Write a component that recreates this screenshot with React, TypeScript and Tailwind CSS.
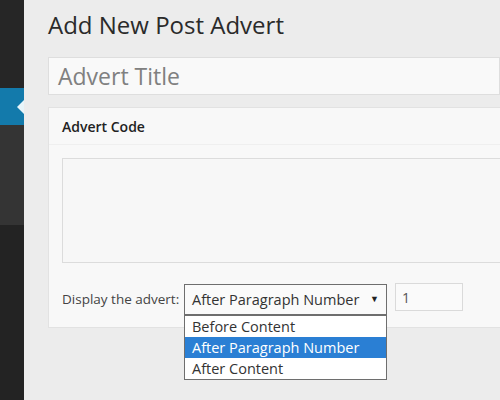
import React from "react";

export default function App() {
  return (
    <div
      className="w-[500px] h-[400px] overflow-hidden flex bg-[#ececec]"
      style={{ fontFamily: '"Open Sans", "Noto Sans", sans-serif' }}
    >
      {/* sidebar */}
      <div className="w-[24px] shrink-0 flex flex-col">
        <div className="h-[88px] bg-[#262626]" />
        <div className="h-[37px] bg-[#137aab] relative">
          <div className="absolute right-0 top-[12px] w-0 h-0 border-y-[7px] border-y-transparent border-r-[7px] border-r-[#e8f5fa]" />
        </div>
        <div className="h-[100px] bg-[#343434]" />
        <div className="flex-1 bg-[#232323]" />
      </div>

      {/* main */}
      <div className="flex-1 pl-[24px] flex flex-col">
        <div className="h-[57px] pt-[10px]">
          <h1 className="text-[24px] leading-[30px] text-[#2a2a2a] font-normal">
            Add New Post Advert
          </h1>
        </div>

        <div className="h-[38px] bg-[#f9f9f9] border border-[#dedede] flex items-center pl-[9px]">
          <span className="text-[23px] text-[#808080] leading-none">Advert Title</span>
        </div>

        <div className="mt-[12px] h-[221px] bg-[#f8f8f8] border border-[#e2e2e2] border-r-0 flex flex-col">
          <div className="h-[37px] flex items-center pl-[13px] border-b border-[#efefef]">
            <span className="text-[14px] font-semibold text-[#222]">
              Advert Code
            </span>
          </div>
          <div className="pl-[13px] pt-[13px]">
            <div className="h-[105px] bg-[#f7f7f7] border border-[#dcdcdc] border-r-0" />
          </div>
          <div className="pl-[13px] mt-[21px] flex items-start">
            <span className="w-[122px] h-[31px] flex items-center text-[13.5px] text-[#444]">
              Display the advert:
            </span>
            <div className="relative w-[203px] h-[31px] border border-[#6e6e6e] bg-[#fafafa] flex items-center pl-[7px]">
              <span className="text-[14.5px] text-[#333]">After Paragraph Number</span>
              <span className="absolute right-[7px] top-[7px] text-[9px] text-[#222]">▼</span>
              <div className="absolute left-[-1px] top-[30px] w-[203px] border border-[#6e6e6e] bg-white flex flex-col">
                <div className="h-[21px] flex items-center pl-[7px] text-[14.5px] text-[#333]">
                  Before Content
                </div>
                <div className="h-[21px] flex items-center pl-[7px] text-[14.5px] text-white bg-[#2a7fd4]">
                  After Paragraph Number
                </div>
                <div className="h-[21px] flex items-center pl-[7px] text-[14.5px] text-[#333]">
                  After Content
                </div>
              </div>
            </div>
            <div className="ml-[8px] mt-[-1px] w-[68px] h-[28px] border border-[#dadada] bg-[#fafafa] flex items-center pl-[6px]">
              <span className="text-[14px] text-[#555]">1</span>
            </div>
          </div>
        </div>
        <div className="flex-1" />
      </div>
    </div>
  );
}
